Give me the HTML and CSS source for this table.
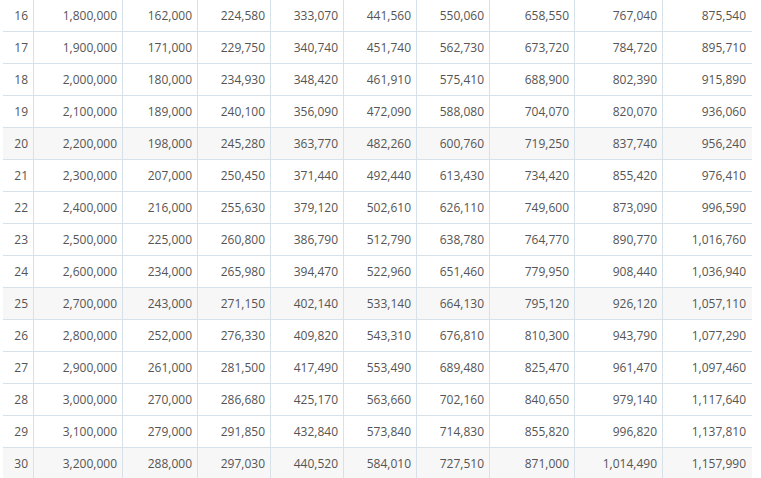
FILE: index.html
```html
<!DOCTYPE html>
<html>
<head>
<meta charset="utf-8">
<link rel="stylesheet" href="styles.css">
</head>
<body>
<table class="grid">
<colgroup>
<col class="c1"><col class="c2"><col class="c3"><col class="c4"><col class="c4"><col class="c4"><col class="c4"><col class="c8"><col class="c9"><col class="c10">
</colgroup>
<tbody>
<tr><td>16</td><td>1,800,000</td><td>162,000</td><td>224,580</td><td>333,070</td><td>441,560</td><td>550,060</td><td>658,550</td><td>767,040</td><td>875,540</td></tr>
<tr><td>17</td><td>1,900,000</td><td>171,000</td><td>229,750</td><td>340,740</td><td>451,740</td><td>562,730</td><td>673,720</td><td>784,720</td><td>895,710</td></tr>
<tr><td>18</td><td>2,000,000</td><td>180,000</td><td>234,930</td><td>348,420</td><td>461,910</td><td>575,410</td><td>688,900</td><td>802,390</td><td>915,890</td></tr>
<tr><td>19</td><td>2,100,000</td><td>189,000</td><td>240,100</td><td>356,090</td><td>472,090</td><td>588,080</td><td>704,070</td><td>820,070</td><td>936,060</td></tr>
<tr class="alt"><td>20</td><td>2,200,000</td><td>198,000</td><td>245,280</td><td>363,770</td><td>482,260</td><td>600,760</td><td>719,250</td><td>837,740</td><td>956,240</td></tr>
<tr><td>21</td><td>2,300,000</td><td>207,000</td><td>250,450</td><td>371,440</td><td>492,440</td><td>613,430</td><td>734,420</td><td>855,420</td><td>976,410</td></tr>
<tr><td>22</td><td>2,400,000</td><td>216,000</td><td>255,630</td><td>379,120</td><td>502,610</td><td>626,110</td><td>749,600</td><td>873,090</td><td>996,590</td></tr>
<tr><td>23</td><td>2,500,000</td><td>225,000</td><td>260,800</td><td>386,790</td><td>512,790</td><td>638,780</td><td>764,770</td><td>890,770</td><td>1,016,760</td></tr>
<tr><td>24</td><td>2,600,000</td><td>234,000</td><td>265,980</td><td>394,470</td><td>522,960</td><td>651,460</td><td>779,950</td><td>908,440</td><td>1,036,940</td></tr>
<tr class="alt"><td>25</td><td>2,700,000</td><td>243,000</td><td>271,150</td><td>402,140</td><td>533,140</td><td>664,130</td><td>795,120</td><td>926,120</td><td>1,057,110</td></tr>
<tr><td>26</td><td>2,800,000</td><td>252,000</td><td>276,330</td><td>409,820</td><td>543,310</td><td>676,810</td><td>810,300</td><td>943,790</td><td>1,077,290</td></tr>
<tr><td>27</td><td>2,900,000</td><td>261,000</td><td>281,500</td><td>417,490</td><td>553,490</td><td>689,480</td><td>825,470</td><td>961,470</td><td>1,097,460</td></tr>
<tr><td>28</td><td>3,000,000</td><td>270,000</td><td>286,680</td><td>425,170</td><td>563,660</td><td>702,160</td><td>840,650</td><td>979,140</td><td>1,117,640</td></tr>
<tr><td>29</td><td>3,100,000</td><td>279,000</td><td>291,850</td><td>432,840</td><td>573,840</td><td>714,830</td><td>855,820</td><td>996,820</td><td>1,137,810</td></tr>
<tr class="alt"><td>30</td><td>3,200,000</td><td>288,000</td><td>297,030</td><td>440,520</td><td>584,010</td><td>727,510</td><td>871,000</td><td>1,014,490</td><td>1,157,990</td></tr>
</tbody>
</table>
</body>
</html>
```
FILE: styles.css
```css
html, body {
  margin: 0;
  padding: 0;
  background: #fff;
}
body {
  padding-left: 3px;
  font-family: "Open Sans", "Liberation Sans", sans-serif;
  font-size: 12px;
  color: #555;
}
.grid {
  border-collapse: separate;
  border-spacing: 0;
  table-layout: fixed;
  width: 749px;
}
.c1 { width: 31px; }
.c2 { width: 89px; }
.c3 { width: 75px; }
.c4 { width: 73px; }
.c8 { width: 85px; }
.c9 { width: 88px; }
.c10 { width: 89px; }
.grid td {
  box-sizing: border-box;
  height: 32px;
  padding: 0 5px 0 0;
  text-align: right;
  vertical-align: middle;
  white-space: nowrap;
  border-right: 1px solid #d6e1ea;
  border-bottom: 1px solid #d6e1ea;
  line-height: 16px;
}
.grid td:last-child {
  border-right: none;
  padding-right: 6px;
}
.grid tr.alt td {
  background: #f7f7f7;
}
```
